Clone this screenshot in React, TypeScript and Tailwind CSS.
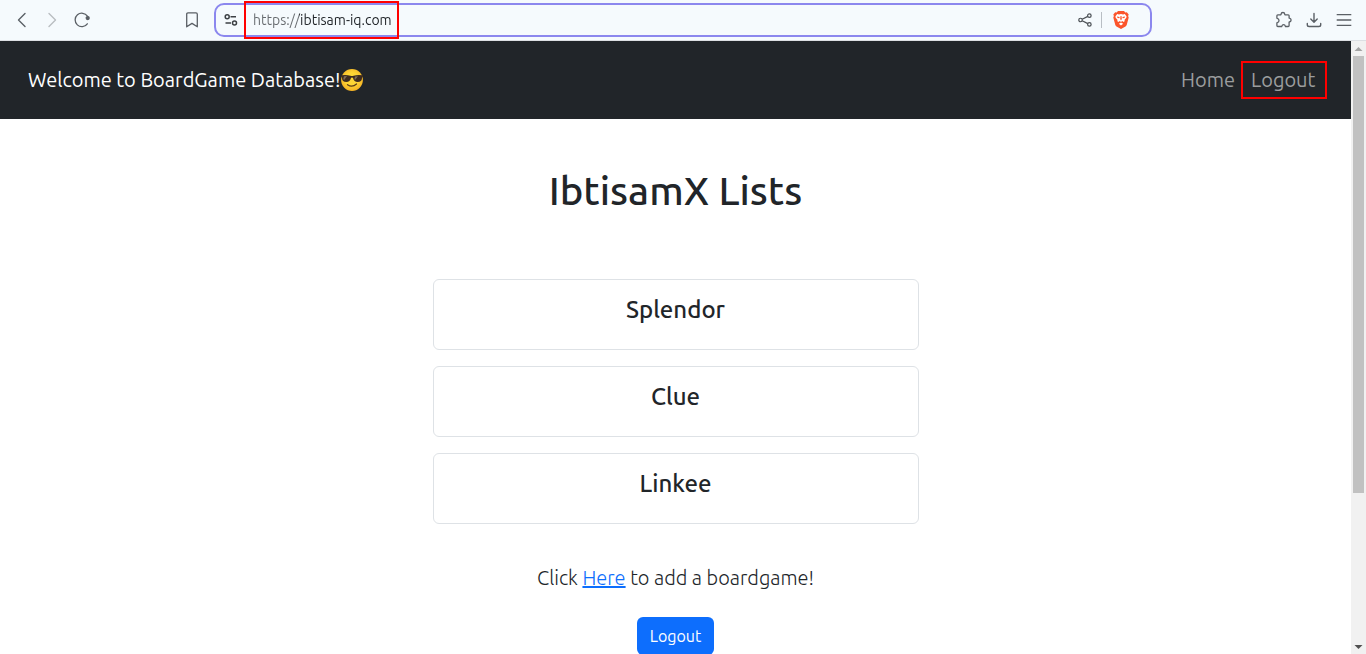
import type { ReactNode } from "react";

const games = ["Splendor", "Clue", "Linkee"];

function IconButton({ label, children }: { label: string; children: ReactNode }) {
  return (
    <button type="button" aria-label={label} className="flex size-[30px] items-center justify-center text-[#5b6066]">
      {children}
    </button>
  );
}

function Toolbar() {
  return (
    <header className="grid h-[41px] shrink-0 grid-cols-[214px_minmax(0,1fr)_214px] items-center border-b border-[#dcdfe3] bg-[#f5fafd]">
      <div className="flex items-center pr-[7px] pl-[7px]">
        <IconButton label="Back">
          <svg width="16" height="16" viewBox="0 0 16 16" fill="none" stroke="currentColor" strokeWidth="1.4" strokeLinecap="round" strokeLinejoin="round">
            <path d="M11 1.5 4.5 8l6.500 6.500" />
          </svg>
        </IconButton>
        <IconButton label="Forward">
          <svg width="16" height="16" viewBox="0 0 16 16" fill="none" stroke="#b9bdc1" strokeWidth="1.400" strokeLinecap="round" strokeLinejoin="round">
            <path d="M5 1.500 11.500 8 5 14.500" />
          </svg>
        </IconButton>
        <IconButton label="Reload">
          <svg width="16" height="16" viewBox="0 0 16 16" fill="none" stroke="currentColor" strokeWidth="1.300" strokeLinecap="round">
            <path d="M13.300 11.800A6.700 6.700 0 1 1 13.400 4.200L14 5.200" />
            <circle cx="13.700" cy="6.100" r="1.500" fill="currentColor" />
          </svg>
        </IconButton>
        <span className="ml-auto">
          <IconButton label="Bookmark this page">
            <svg width="16" height="16" viewBox="0 0 16 16" fill="none" stroke="currentColor" strokeWidth="1.300" strokeLinejoin="round">
              <path d="M2.700 2.200q0-1.300 1.300-1.300h8q1.300 0 1.300 1.300v12.600L8 11.400l-5.300 3.400z" />
            </svg>
          </IconButton>
        </span>
      </div>

      <div className="flex h-[34px] items-center rounded-[10px] border-2 border-[#8b87ee] bg-[#f5fafd]">
        <button type="button" aria-label="Site information" className="flex w-7 items-center justify-end pr-1.5">
          <svg width="14" height="14" viewBox="0 0 14 14" fill="none" stroke="#3c4044" strokeWidth="1.500">
            <circle cx="3.200" cy="3.700" r="2" />
            <path d="M6.500 3.700H12M1.500 10H7" />
            <circle cx="10.500" cy="10" r="2" />
          </svg>
        </button>
        <span className="flex h-[38px] w-[155px] shrink-0 items-center border-2 border-[#f00] pl-[7px]">
          <input
            aria-label="Address"
            type="text"
            defaultValue="https://ibtisam-iq.com"
            className="h-6 w-full bg-[linear-gradient(90deg,#666a6e_46px,#1f2327_46px)] bg-clip-text text-sm text-transparent outline-none"
          />
        </span>
        <span className="ml-auto flex items-center pr-[13px]">
          <IconButton label="Share">
            <svg width="14" height="14" viewBox="0 0 16 16" fill="none" stroke="#4c5156" strokeWidth="1.400">
              <circle cx="2.900" cy="8" r="2" />
              <circle cx="13" cy="3" r="2" />
              <circle cx="13" cy="13" r="2" />
              <path d="m4.800 7.100 6.400-3.200M4.800 8.900l6.400 3.200" />
            </svg>
          </IconButton>
          <span className="ml-px h-4 w-px bg-[#b8bec4]" />
          <button type="button" aria-label="Brave Shields" className="ml-[11px] flex items-center justify-center">
            <svg width="16" height="18" viewBox="0 0 16 18">
              <path fill="#fb542b" d="M5 0h6l1.300 1.400 1.500-.2L15.700 3.500l-.6 1.500.6 1.600-2 7.300q-.3.900-1.200 1.500L8 18l-4.500-2.600q-.9-.6-1.200-1.500L.300 6.600.900 5 .300 3.500l1.900-2.300 1.500.2z" />
              <path fill="#fff" d="m4.200 3 1.700.4L8 3l2.100.4 1.700-.4 1.800 2.500-.3 1.200-1.900 2.200.4 1.200-1.100.9-1.500-.9L8 11l-1.200-.9-1.500.9-1.100-.9.400-1.200-1.900-2.200-.3-1.200zM8 11.600l2.200 1.200L8 14.600l-2.200-1.800z" />
              <path fill="#fb542b" d="m4 5.600 2.700.5-.4 1.200-1.800-.2zM12 5.600l-2.700.5.400 1.200 1.800-.2zM7.500 5h1l.3 3L8 9.600 7.200 8z" />
            </svg>
          </button>
          <span className="w-2" />
        </span>
      </div>

      <div className="flex items-center justify-end pr-[7px]">
        <IconButton label="Extensions">
          <svg width="18" height="18" viewBox="0 0 18 18" fill="none" stroke="currentColor" strokeWidth="1.300" strokeLinejoin="round">
            <path d="M2.800 3.800h3.100c.2-.4-.1-2.300 2-2.300s1.800 1.900 2 2.300h3.300q.9 0 .9.900v2.400c.4.200 2 .1 2 2s-1.600 1.800-2 2v3.500q0 .9-.9.900h-2.700c-.3-.4-.1-1.800-1.900-1.800s-1.600 1.400-1.900 1.800H2.800q-.9 0-.9-.9v-2.900c.4-.3 2.100-.1 2.100-2.200S2.300 7.400 1.900 7.200V4.700q0-.9.900-.9z" />
          </svg>
        </IconButton>
        <IconButton label="Downloads">
          <svg width="16" height="16" viewBox="0 0 16 16" fill="none" stroke="currentColor" strokeWidth="1.400" strokeLinecap="round" strokeLinejoin="round">
            <path d="M8 1.500v8.500M4.800 7 8 10.200 11.200 7M1.300 11.500v1.200q0 1.800 1.800 1.800h9.800q1.800 0 1.800-1.800v-1.200" />
          </svg>
        </IconButton>
        <IconButton label="Menu">
          <svg width="16" height="16" viewBox="0 0 16 16" fill="none" stroke="currentColor" strokeWidth="1.300">
            <path d="M.700 2.600h14.600M.700 8h14.600M.700 13.400h14.600" />
          </svg>
        </IconButton>
      </div>
    </header>
  );
}

function Sunglasses() {
  return (
    <svg role="img" aria-label="Smiling face with sunglasses" width="24" height="24" viewBox="0 0 24 24" className="shrink-0">
      <defs>
        <radialGradient id="face" cx="50%" cy="45%" r="55%">
          <stop offset="0.500" stopColor="#fdd535" />
          <stop offset="1" stopColor="#f4b224" />
        </radialGradient>
      </defs>
      <circle cx="12" cy="12" r="10.900" fill="url(#face)" />
      <path fill="#3d2b20" d="M1.200 7.300q5-1 9.200.4 1.600.5 3.200 0 4.200-1.400 9.200-.4l.1 1.700-.8.500q-.2 4.600-4.500 4.600-3.600 0-4.600-4-.2-.6-1-.6t-1 .6q-1 4-4.600 4-4.300 0-4.500-4.600l-.8-.5z" />
      <path fill="#7c6a55" d="m4 8.200 3-.1-3 4.200-.7-1.500zM15 8.600l3-.4-3 3.800-.5-1.100z" />
      <path fill="none" stroke="#5c3b16" strokeWidth="1.300" strokeLinecap="round" d="M7.500 16.700q4.700 3.200 9-.7" />
    </svg>
  );
}

function NavBar() {
  return (
    <nav className="flex h-[78px] shrink-0 items-center justify-between bg-[#212529] pr-6 pl-7 text-xl">
      <a href="#home" className="flex items-center text-white">
        Welcome to BoardGame Database!
        <Sunglasses />
      </a>
      <div className="flex items-center gap-1.5 text-[#9b9d9e]">
        <a href="#home">Home</a>
        <a href="#logout" className="flex h-[38px] w-[86px] items-center border-2 border-[#f00] pl-2">Logout</a>
      </div>
    </nav>
  );
}

function ScrollBar() {
  return (
    <div aria-hidden="true" className="flex w-[15px] shrink-0 flex-col items-center bg-[#f1f1f1]">
      <svg width="15" height="15" viewBox="0 0 15 15"><path d="M3.500 10h8l-4-4z" fill="#a3a3a3" /></svg>
      <div className="flex w-full grow flex-col px-0.5">
        <div className="grow-[437] bg-[#c1c1c1]" />
        <div className="grow-[146]" />
      </div>
      <svg width="15" height="15" viewBox="0 0 15 15"><path d="M3.500 6h8l-4 4z" fill="#505050" /></svg>
    </div>
  );
}

export default function App() {
  return (
    <div className="flex h-screen flex-col overflow-hidden bg-white font-['Ubuntu','Noto_Sans',sans-serif] text-[#212529]">
      <Toolbar />
      <div className="flex min-h-0 grow">
        <div className="min-w-0 grow overflow-hidden">
          <NavBar />
          <main className="flex flex-col items-center pt-12">
            <h1 className="text-[40px] leading-12 font-medium">IbtisamX Lists</h1>
            <ul className="mt-16 flex w-[486px] max-w-full flex-col gap-4">
              {games.map((game) => (
                <li key={game} className="h-[71px] rounded-md border border-[#dee2e6] pt-4 text-center text-2xl leading-7 font-medium">
                  {game}
                </li>
              ))}
            </ul>
            <p className="mt-[39px] text-xl leading-[30px] font-light">
              Click <a href="#add" className="text-[#0d6efd] underline">Here</a> to add a boardgame!
            </p>
            <button type="button" className="mt-6 h-[38px] rounded-md bg-[#0d6efd] px-[13px] text-base text-white">Logout</button>
          </main>
        </div>
        <ScrollBar />
      </div>
    </div>
  );
}
